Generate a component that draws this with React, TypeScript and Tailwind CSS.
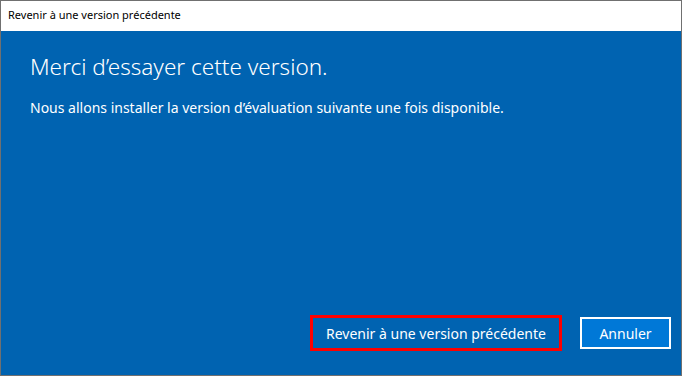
const App = () => {
  return (
    <div
      className="flex h-[376px] w-[682px] flex-col border border-[#707070] bg-[#0063b1]"
      style={{ fontFamily: '"Noto Sans", "Segoe UI", sans-serif' }}
    >
      <div className="h-[30px] shrink-0 bg-white pl-[7px] pt-[6px] text-[11px] leading-[15px] text-black">
        Revenir à une version précédente
      </div>

      <div className="flex flex-1 flex-col pt-[21px] text-white">
        <div className="px-[29px]">
          <h1 className="text-[22.5px] font-light leading-[30px]">Merci d’essayer cette version.</h1>
          <p className="mt-[16px] text-[14px] leading-[20px]">
            Nous allons installer la version d’évaluation suivante une fois disponible.
          </p>
        </div>

        <div className="mt-auto mb-[24px] flex items-center justify-end gap-[18px] pr-[10px]">
          <div className="border-[3px] border-[#ff0000]">
            <button className="h-[30px] w-[246px] text-[14px] text-white">
              Revenir à une version précédente
            </button>
          </div>
          <button className="h-[32px] w-[91px] border-2 border-white bg-[#0078d7] text-[14px] text-white">
            Annuler
          </button>
        </div>
      </div>
    </div>
  );
};

export default App;
